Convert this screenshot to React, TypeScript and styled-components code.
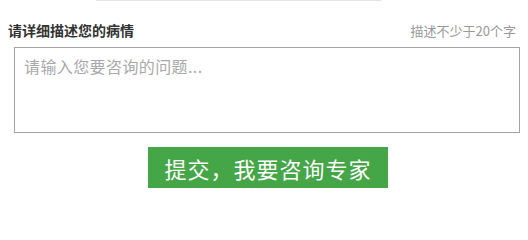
import React from "react";
import styled, { createGlobalStyle } from "styled-components";

const GlobalStyle = createGlobalStyle`
  html, body {
    margin: 0;
    padding: 0;
    background: #fff;
    font-family: "Noto Sans CJK SC", "Liberation Sans", sans-serif;
  }
`;

const App: React.FC = () => {
  return (
    <>
      <GlobalStyle />
      <Page>
        <TopRule />
        <Header>
          <Label>请详细描述您的病情</Label>
          <Hint>描述不少于20个字</Hint>
        </Header>
        <Question placeholder="请输入您要咨询的问题..." />
        <Actions>
          <Submit type="button">提交，我要咨询专家</Submit>
        </Actions>
      </Page>
    </>
  );
};

export default App;

const Page = styled.div`
  width: 528px;
  height: 201px;
  display: flex;
  flex-direction: column;
`;

const TopRule = styled.div`
  width: 285px;
  height: 1px;
  margin-left: 96px;
  background: #e3e3e3;
`;

const Header = styled.div`
  display: flex;
  justify-content: space-between;
  align-items: center;
  margin-top: 20px;
  padding: 0 12px 0 8px;
  height: 18px;
`;

const Label = styled.span`
  font-size: 14px;
  font-weight: bold;
  color: #333;
`;

const Hint = styled.span`
  font-size: 13px;
  color: #999;
`;

const Question = styled.textarea`
  box-sizing: border-box;
  width: 506px;
  height: 86px;
  margin: 8px 0 0 14px;
  padding: 6px 9px;
  border: 1px solid #a3a3a3;
  font-family: "Noto Sans CJK SC", "Liberation Sans", sans-serif;
  font-size: 16px;
  line-height: 1.5;
  letter-spacing: 0.4px;
  color: #333;
  resize: none;
  outline: none;

  &::placeholder {
    color: #a9a9a9;
  }
`;

const Actions = styled.div`
  display: flex;
  padding-left: 148px;
  margin-top: 14px;
`;

const Submit = styled.button`
  width: 240px;
  height: 41px;
  border: none;
  background: #44a647;
  color: #fff;
  font-family: "Noto Sans CJK SC", "Liberation Sans", sans-serif;
  font-size: 22px;
  letter-spacing: 1px;
  padding: 0;
  cursor: pointer;
`;
